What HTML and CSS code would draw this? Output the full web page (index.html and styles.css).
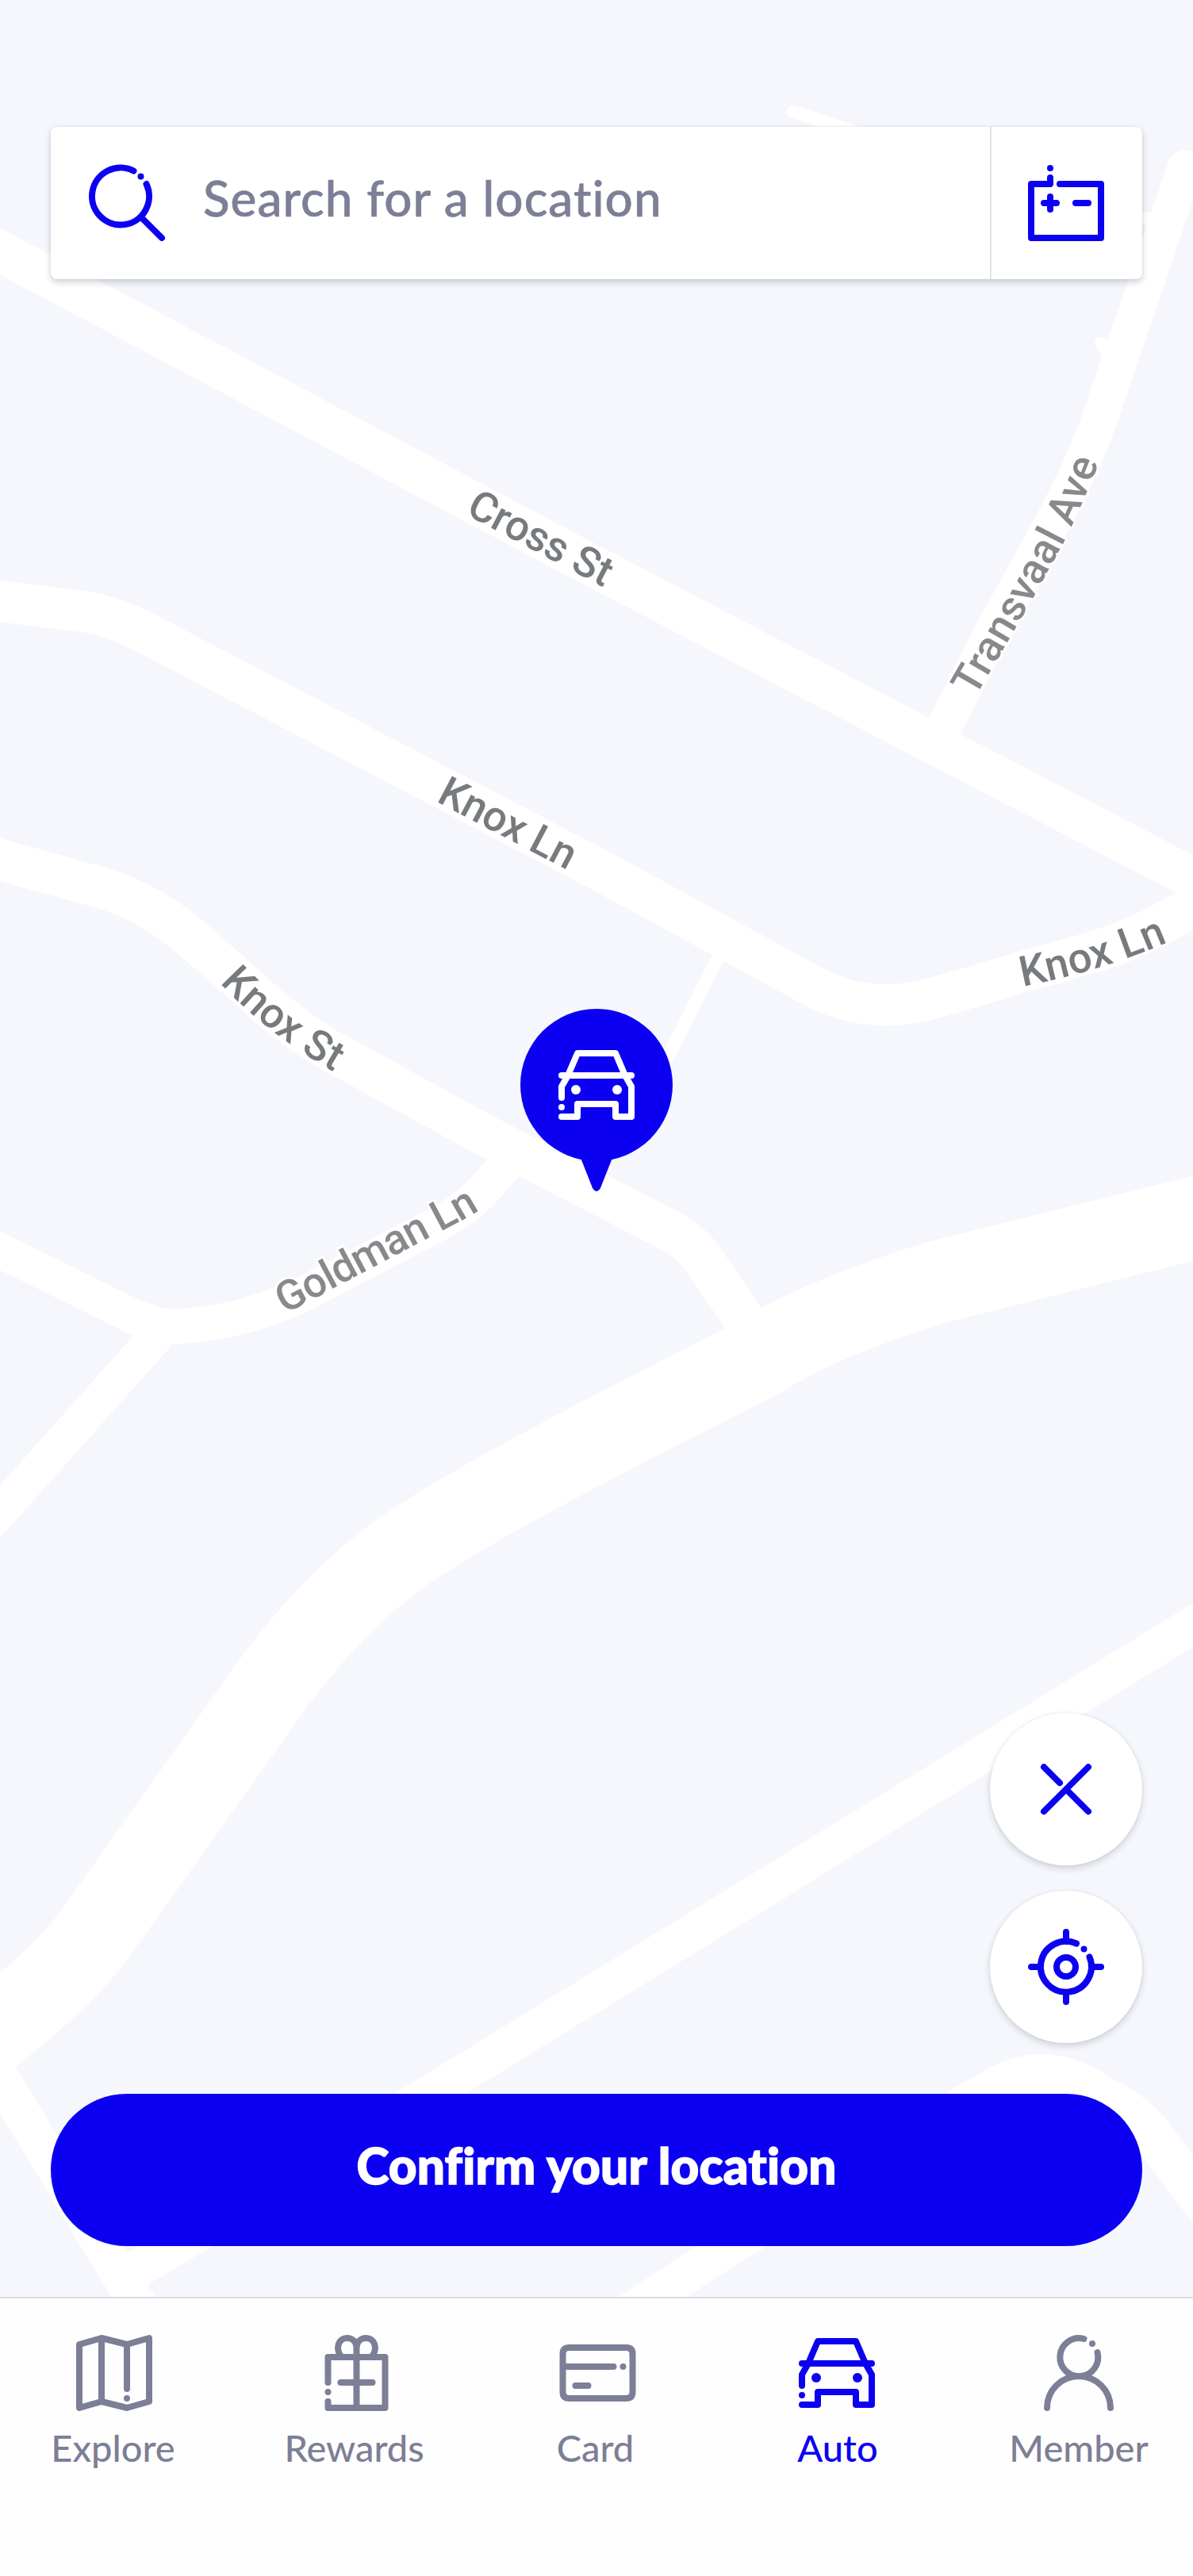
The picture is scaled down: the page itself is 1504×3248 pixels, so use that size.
FILE: index.html
```html
<!DOCTYPE html>
<html lang="en">
<head>
<meta charset="utf-8">
<title>Choose your location</title>
<link rel="stylesheet" href="styles.css">
</head>
<body>
<div class="screen">
  <svg class="map" viewBox="0 0 1504 3248" aria-hidden="true">
    <g class="roads">
      <path class="w52" d="M-20 306L0 317L752 716L1165 931L1530 1121"/>
      <path class="w46" d="M1186 925L1250 799L1320 672Q1356 606 1380 546L1426 412L1494 212"/>
      <path class="w16" d="M1388 433L1412 464M1440 275L1470 278M1000 141L1100 174"/>
      <path class="w52" d="M-20 755L0 758L112 772Q140 777 176 794L752 1095L1022 1242Q1084 1277 1158 1263Q1182 1258 1287 1226L1380 1200Q1430 1184 1470 1162L1530 1128"/>
      <path class="w52" d="M-20 1078L0 1084L130 1120Q190 1138 245 1186L320 1252Q350 1282 408 1320L605 1428L835 1547Q868 1562 885 1586L960 1695"/>
      <path class="w44" d="M645 1460L610 1500Q592 1520 562 1538L380 1633Q300 1670 214 1673Q184 1669 150 1651L0 1577L-20 1567"/>
      <path class="w44" d="M205 1676L0 1906L-20 1928"/>
      <path class="w16" d="M910 1198L830 1356"/>
      <path class="w104" d="M-60 2600Q80 2500 130 2424L312 2168Q400 2038 490 1970Q560 1914 834 1774L960 1710Q1030 1664 1180 1617L1530 1530"/>
      <path class="w48" d="M-20 2586L168 2896L210 2964M1530 2033L542 2640L217 2835L168 2864M1240 2642L921 2832L780 2924"/>
      <path class="w52" d="M1180 2676L1250 2636Q1320 2592 1390 2645Q1430 2660 1460 2702L1530 2794"/>
    </g>
    <defs>
      <path id="cross-st" d="M586 648L790 756"/>
      <path id="knox-ln-west" d="M549 1010L740 1110"/>
      <path id="knox-ln-east" d="M1289 1244Q1400 1222 1490 1180"/>
      <path id="knox-st" d="M277 1239Q338 1306 436 1360"/>
      <path id="transvaal" d="M1229 880L1303 753L1340 686Q1364 640 1396 556"/>
      <path id="goldman" d="M359 1657L572 1544Q602 1529 622 1513"/>
    </defs>
    <g class="labels">
      <text textLength="198"><textPath href="#cross-st">Cross St</textPath></text>
      <text textLength="188"><textPath href="#knox-ln-west">Knox Ln</textPath></text>
      <text textLength="192"><textPath href="#knox-ln-east">Knox Ln</textPath></text>
      <text textLength="183"><textPath href="#knox-st">Knox St</textPath></text>
      <text class="soft" textLength="336"><textPath href="#transvaal">Transvaal Ave</textPath></text>
      <text class="soft" textLength="279"><textPath href="#goldman">Goldman Ln</textPath></text>
    </g>
  </svg>

  <svg class="pin" viewBox="0 0 192 230" aria-hidden="true">
    <circle cx="96" cy="96" r="96"/>
    <path d="M76 188L91 226Q96 234 101 226L116 188Z"/>
    <g class="icon" transform="translate(48 48)">
      <path d="M4 64V50L12 36L24 8H72L84 36L92 50V88H72V72H24V88H4M4 36H92"/>
      <g class="dots"><circle cx="4" cy="76" r="4"/><circle cx="22" cy="54" r="6"/><circle cx="74" cy="54" r="6"/></g>
    </g>
  </svg>

  <header class="search">
    <div class="field">
      <svg class="icon" viewBox="0 0 96 96"><path d="M56.5 7.500A36 36 0 1 0 72.500 24M66 66L92 92"/><g class="dots"><circle cx="65.500" cy="14.500" r="4"/></g></svg>
      <span class="placeholder">Search for a location</span>
    </div>
    <button class="battery" aria-label="Battery">
      <svg class="icon" viewBox="0 0 96 96"><path d="M28 16V24H4V92H92V24H40M20 48H36M28 40V56M60 48H76"/><g class="dots"><circle cx="28" cy="4" r="4"/></g></svg>
    </button>
  </header>

  <div class="actions">
    <button class="round" aria-label="Close">
      <svg class="icon" viewBox="0 0 96 96"><path d="M20 20L40 40M76 20L20 76M48 48L76 76"/></svg>
    </button>
    <button class="round" aria-label="Locate me">
      <svg class="icon" viewBox="0 0 96 96"><path d="M61 18.500A32 32 0 1 0 77.500 35.500M48 4V16M48 80V92M4 48H16M80 48H92"/><circle cx="48" cy="48" r="12"/><g class="dots"><circle cx="70.500" cy="25.500" r="4"/></g></svg>
    </button>
    <button class="confirm">Confirm your location</button>
  </div>

  <nav class="tabs">
    <a class="tab">
      <svg class="icon" viewBox="0 0 96 96"><path d="M4 12L32 4L64 12L92 4V84L64 92L32 84L4 92ZM32 4V84M64 12V68"/><g class="dots"><circle cx="64" cy="80" r="4"/></g></svg>
      <span class="nudge">Explore</span>
    </a>
    <a class="tab">
      <svg class="icon" viewBox="-1.500 0 96 96"><path d="M12 60V28H84V92H12V84M48 28V92M28 60H68M29 28C20 16 26 4 36 4C43 4 48 9 48 17V28M67 28C76 16 70 4 60 4C53 4 48 9 48 17"/><g class="dots"><circle cx="12" cy="72" r="4"/></g></svg>
      <span class="nudge">Rewards</span>
    </a>
    <a class="tab">
      <svg class="icon" viewBox="-1.500 0 96 96"><path d="M12 16H84Q92 16 92 24V72Q92 80 84 80H12Q4 80 4 72V24Q4 16 12 16ZM4 40H68M20 64H36"/><g class="dots"><circle cx="80" cy="40" r="4"/></g></svg>
      <span class="nudge">Card</span>
    </a>
    <a class="tab active">
      <svg class="icon" viewBox="1 0 96 96"><path d="M4 64V50L12 36L24 8H72L84 36L92 50V88H72V72H24V88H4M4 36H92"/><g class="dots"><circle cx="4" cy="76" r="4"/><circle cx="22" cy="54" r="6"/><circle cx="74" cy="54" r="6"/></g></svg>
      <span>Auto</span>
    </a>
    <a class="tab">
      <svg class="icon" viewBox="0 0 96 96"><path d="M54.500 5A24 24 0 1 0 71.500 22M8 92A40 40 0 0 1 88 92"/><g class="dots"><circle cx="65" cy="11" r="4"/></g></svg>
      <span>Member</span>
    </a>
  </nav>
</div>
</body>
</html>
```
FILE: styles.css
```css
* { box-sizing: border-box; }

body {
  margin: 0;
  font-family: Lato, "Open Sans", sans-serif;
  font-variant-ligatures: none;
  color: #7c7f96;
}

button {
  margin: 0;
  padding: 0;
  border: 0;
  font: inherit;
}

.screen {
  position: relative;
  display: flex;
  flex-direction: column;
  width: 1504px;
  height: 3248px;
  overflow: hidden;
  background: #f5f7fc;
}

/* map canvas */
.map {
  position: absolute;
  inset: 0;
  width: 1504px;
  height: 3248px;
}

.roads path {
  fill: none;
  stroke: #fff;
  stroke-linecap: round;
  stroke-linejoin: round;
}
.roads .w16 { stroke-width: 16px; }
.roads .w44 { stroke-width: 44px; }
.roads .w46 { stroke-width: 45px; }
.roads .w48 { stroke-width: 47px; }
.roads .w52 { stroke-width: 52px; }
.roads .w104 { stroke-width: 104px; }

.labels text {
  font: 500 53px Roboto, sans-serif;
  fill: #777b7e;
  stroke: #fff;
  stroke-width: 6px;
  stroke-linejoin: round;
  paint-order: stroke;
}
.labels .soft { fill: #87898b; }

.pin {
  position: absolute;
  left: 656px;
  top: 1272px;
  width: 192px;
  height: 230px;
  fill: #0c00f2;
  color: #fff;
}

/* icons */
.icon {
  flex: none;
  width: 96px;
  height: 96px;
  fill: none;
  stroke: currentColor;
  stroke-width: 8px;
  stroke-linecap: round;
  stroke-linejoin: round;
  overflow: visible;
}
.icon .dots {
  fill: currentColor;
  stroke: none;
}

/* search bar */
.search {
  position: relative;
  display: flex;
  height: 192px;
  margin: 160px 64px 0;
  border-radius: 8px;
  background: #fff;
  box-shadow: 0 4px 8px rgba(30, 34, 60, .2), 0 0 4px rgba(30, 34, 60, .06);
}
.field {
  display: flex;
  flex: 1;
  align-items: center;
  gap: 48px;
  padding-left: 48px;
}
.field .icon, .battery { color: #0c00f2; }
.placeholder {
  padding-bottom: 14px;
  font-size: 62px;
  font-weight: 500;
  line-height: 80px;
  letter-spacing: 1.05px;
  white-space: nowrap;
  -webkit-text-stroke: .6px currentColor;
}
.battery {
  display: flex;
  align-items: center;
  justify-content: center;
  width: 192px;
  padding-right: 2px;
  border-left: 2px solid #dfe4ee;
  border-radius: 0 8px 8px 0;
  background: none;
}

/* floating actions */
.actions {
  position: relative;
  display: flex;
  flex-direction: column;
  align-items: flex-end;
  gap: 32px;
  margin-top: auto;
  padding: 0 64px 64px;
}
.round {
  display: flex;
  align-items: center;
  justify-content: center;
  width: 192px;
  height: 192px;
  border-radius: 50%;
  background: #fff;
  color: #0c00f2;
  box-shadow: 0 4px 8px rgba(30, 34, 60, .17), 0 0 4px rgba(30, 34, 60, .06);
}
.confirm {
  align-self: stretch;
  height: 192px;
  margin-top: 32px;
  padding-bottom: 13px;
  border-radius: 96px;
  background: #0c00f2;
  color: #fff;
  font-size: 62px;
  font-weight: 900;
  letter-spacing: .2px;
  font-variant-ligatures: none;
  -webkit-text-stroke: 1.5px currentColor;
}

/* tab bar */
.tabs {
  position: relative;
  display: grid;
  grid-template-columns: repeat(5, 304px);
  justify-content: center;
  height: 352px;
  padding-top: 46px;
  border-top: 2px solid #dcdde0;
  background: #fefefe;
}
.tab {
  display: flex;
  flex-direction: column;
  align-items: center;
  gap: 18px;
  font-size: 47px;
  font-weight: 500;
  line-height: 56px;
}
.tab.active { color: #0c00f2; }
.nudge { margin-right: 3px; }
```
